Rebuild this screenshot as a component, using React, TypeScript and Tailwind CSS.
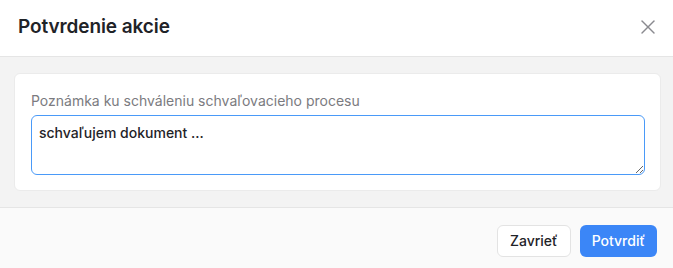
import { X } from "lucide-react";

export default function App() {
  return (
    <div className="w-[673px] h-[268px] bg-white flex flex-col font-['Inter',sans-serif] text-[#1f2328]">
      <div className="h-[57px] flex items-center justify-between pl-[18px] pr-[13px] pb-[2px] border-b border-[#e5e5e5]">
        <h2 className="text-[19px] font-semibold tracking-[-0.1px]">Potvrdenie akcie</h2>
        <button className="text-[#8a8a8f]">
          <X className="w-6 h-6" strokeWidth={1.4} />
        </button>
      </div>
      <div className="bg-[#f3f3f3] pt-4 pb-4 pl-[14px] pr-[12px] border-b border-[#e5e5e5]">
        <div className="bg-white rounded-md border border-[#ebebeb] pt-[17px] pb-[15px] pl-4 pr-[15px]">
          <label className="block text-sm text-[#7b7b80] leading-5">
            Poznámka ku schváleniu schvaľovacieho procesu
          </label>
          <textarea
            className="mt-1 block w-full h-[60px] rounded-md border border-[#4a9af8] px-[7px] py-[7px] text-sm font-medium text-[#1f2328] outline-none resize-y"
            defaultValue="schvaľujem dokument ..."
          />
        </div>
      </div>
      <div className="flex-1 bg-[#fafafa] flex items-start justify-end gap-[9px] pt-[17px] pr-4">
        <button className="h-8 px-3 rounded-md border border-[#e3e3e3] bg-white text-sm font-medium text-[#1f2328]">
          Zavrieť
        </button>
        <button className="h-8 px-3 rounded-md bg-[#3b86f7] text-sm font-medium text-white">
          Potvrdiť
        </button>
      </div>
    </div>
  );
}
